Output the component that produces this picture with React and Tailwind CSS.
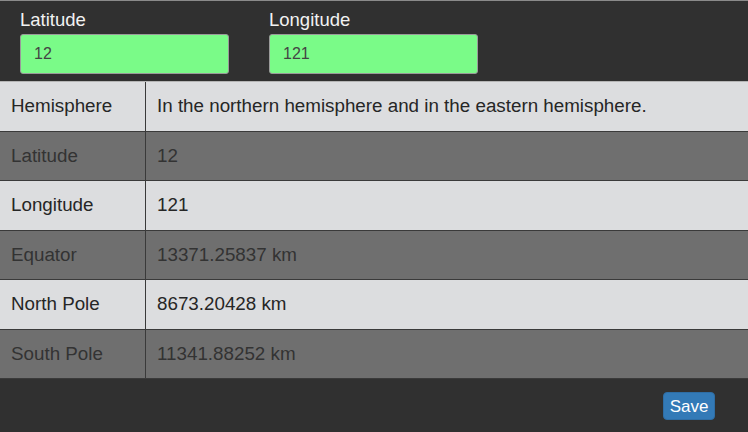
import React from 'react';

const rows = [
  ['Hemisphere', 'In the northern hemisphere and in the eastern hemisphere.'],
  ['Latitude', '12'],
  ['Longitude', '121'],
  ['Equator', '13371.25837 km'],
  ['North Pole', '8673.20428 km'],
  ['South Pole', '11341.88252 km'],
];

const Field = ({ label, value }) => (
  <div className="flex flex-col w-[209px]">
    <label className="text-[18.5px] leading-[22px] text-[#f2f2f2] mb-[3px]">{label}</label>
    <div className="h-[40px] rounded-[3px] border border-[#9a9a9a] bg-[#7afb88] px-[13px] flex items-center text-[16px] text-[#444]">
      {value}
    </div>
  </div>
);

export default function App() {
  return (
    <div className="w-[748px] h-[432px] bg-[#303030] flex flex-col border-t border-[#8a8a8a]" style={{ fontFamily: '"Liberation Sans", Arial, sans-serif' }}>
      <div className="flex gap-[40px] pl-[20px] pt-[8px] h-[80px]">
        <Field label="Latitude" value="12" />
        <Field label="Longitude" value="121" />
      </div>
      <div className="border-t border-[#b5b5b5]">
        {rows.map(([k, v], i) => {
          const light = i % 2 === 0;
          return (
            <div
              key={k}
              className={`flex h-[49.5px] border-b border-[#3a3a3a] text-[18.8px] ${light ? 'bg-[#dcdddf] text-[#262626]' : 'bg-[#6f6f6f] text-[#333]'}`}
            >
              <div className="w-[146px] border-r border-[#3a3a3a] pl-[11px] flex items-center">{k}</div>
              <div className="flex-1 pl-[11px] flex items-center">{v}</div>
            </div>
          );
        })}
      </div>
      <div className="flex-1 flex items-start justify-end pr-[33px] pt-[13px]">
        <button className="h-[28px] w-[52px] rounded-[4px] bg-[#337ab7] border border-[#2e6da4] text-white text-[17px] leading-none">Save</button>
      </div>
    </div>
  );
}
